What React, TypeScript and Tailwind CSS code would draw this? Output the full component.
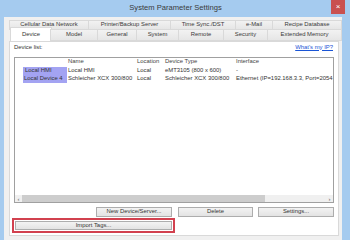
import React from "react";

function Tab({ label, className }: { label: string; className: string }) {
  return (
    <div
      className={
        "flex items-center justify-center border border-[#d9d9d9] -ml-[1px] first:ml-0 bg-gradient-to-b from-[#f2f2f2] to-[#e6e6e6] text-[#3a3a3a] whitespace-nowrap " +
        className
      }
    >
      {label}
    </div>
  );
}

function Btn({ label, className }: { label: string; className: string }) {
  return (
    <div
      className={
        "flex items-center justify-center border border-[#adadad] bg-gradient-to-b from-[#f3f3f3] to-[#e3e3e3] text-[#333] whitespace-nowrap " +
        className
      }
    >
      {label}
    </div>
  );
}

export default function App() {
  return (
    <div className="w-[350px] h-[240px] bg-[#a5cbef] flex flex-col overflow-hidden font-['Liberation_Sans',Arial,sans-serif] text-[5.9px] leading-none">
      {/* Title bar */}
      <div className="h-[17px] flex items-start shrink-0">
        <div className="flex-1 pl-[20px] text-center text-[7.6px] leading-[15px] text-[#3a3a3a]">
          System Parameter Settings
        </div>
        <div className="w-[14px] h-[14px] mr-[5px] bg-[#c9504f] text-white flex items-center justify-center text-[8px] leading-none">
          ×
        </div>
      </div>

      {/* Body */}
      <div className="flex flex-1">
        <div className="ml-[4px] w-[338px] bg-[#f0f0f0] pt-[3px] flex flex-col">
          {/* Tab row 1 */}
          <div className="flex h-[10px] ml-[5px]">
            <Tab label="Cellular Data Network" className="w-[80px]" />
            <Tab label="Printer/Backup Server" className="w-[83px]" />
            <Tab label="Time Sync./DST" className="w-[66px]" />
            <Tab label="e-Mail" className="w-[38px]" />
            <Tab label="Recipe Database" className="w-[70px]" />
          </div>
          {/* Tab row 2 */}
          <div className="flex h-[12px] ml-[6px] -mt-[1px] relative z-10">
            <div className="w-[42px] h-[14px] -mt-[2px] bg-white border border-b-0 border-[#d9d9d9] flex items-center justify-center text-[#333]">
              Device
            </div>
            <Tab label="Model" className="w-[48px] -ml-[2px] h-[12px]" />
            <Tab label="General" className="w-[40px] h-[12px]" />
            <Tab label="System" className="w-[43px] h-[12px]" />
            <Tab label="Remote" className="w-[46px] h-[12px]" />
            <Tab label="Security" className="w-[45px] h-[12px]" />
            <Tab label="Extended Memory" className="w-[75px] h-[12px]" />
          </div>

          {/* Tab page */}
          <div className="ml-[5px] w-[330px] h-[195px] bg-white border border-[#d9d9d9] px-[4px] flex flex-col">
            <div className="flex justify-between items-center h-[9px] mt-[1px]">
              <span className="text-[#333]">Device list:</span>
              <span className="text-[#1a55d6] underline mr-[1px]">What's my IP?</span>
            </div>

            {/* List box */}
            <div className="mt-[5px] h-[146px] border border-[#a0a0a0] flex flex-col">
              <div className="flex flex-col pl-[8px] text-[#333]">
                <div className="flex h-[8px] items-center text-[#444]">
                  <div className="w-[44px]" />
                  <div className="w-[69px] pl-[1px]">Name</div>
                  <div className="w-[28px] pl-[1px]">Location</div>
                  <div className="w-[71px] pl-[1px]">Device Type</div>
                  <div className="pl-[1px]">Interface</div>
                </div>
                <div className="flex h-[8px] items-center mt-[1px]">
                  <div className="w-[44px] h-full bg-[#a3a3f2] pl-[2px] flex items-center">Local HMI</div>
                  <div className="w-[69px] pl-[1px]">Local HMI</div>
                  <div className="w-[28px] pl-[1px]">Local</div>
                  <div className="w-[71px] pl-[1px]">eMT3105 (800 x 600)</div>
                  <div className="pl-[1px]">-</div>
                </div>
                <div className="flex h-[8px] items-center">
                  <div className="w-[44px] h-full bg-[#a3a3f2] pl-[1px] flex items-center whitespace-nowrap">Local Device 4</div>
                  <div className="w-[69px] pl-[1px] whitespace-nowrap">Schleicher XCX 300/800</div>
                  <div className="w-[28px] pl-[1px]">Local</div>
                  <div className="w-[71px] pl-[1px] whitespace-nowrap">Schleicher XCX 300/800</div>
                  <div className="pl-[1px] whitespace-nowrap">Ethernet (IP=192.168.3.3, Port=2054</div>
                </div>
              </div>
              <div className="flex-1" />
              {/* Horizontal scrollbar */}
              <div className="h-[7px] flex bg-[#f0f0f0]">
                <div className="w-[7px] flex items-center justify-center text-[6px] text-[#606060]">‹</div>
                <div className="w-[243px] bg-[#cdcdcd]" />
                <div className="flex-1" />
                <div className="w-[7px] flex items-center justify-center text-[6px] text-[#606060]">›</div>
              </div>
            </div>

            {/* Buttons */}
            <div className="flex justify-end mt-[4px] h-[10px]">
              <Btn label="New Device/Server..." className="w-[76px] mr-[6px]" />
              <Btn label="Delete" className="w-[75px] mr-[5px]" />
              <Btn label="Settings..." className="w-[76px]" />
            </div>
            <div className="mt-[1px] -ml-[2px] w-[163px] border-2 border-[#d2414f] p-[1px]">
              <Btn label="Import Tags..." className="h-[9px]" />
            </div>
          </div>
        </div>
      </div>
    </div>
  );
}
